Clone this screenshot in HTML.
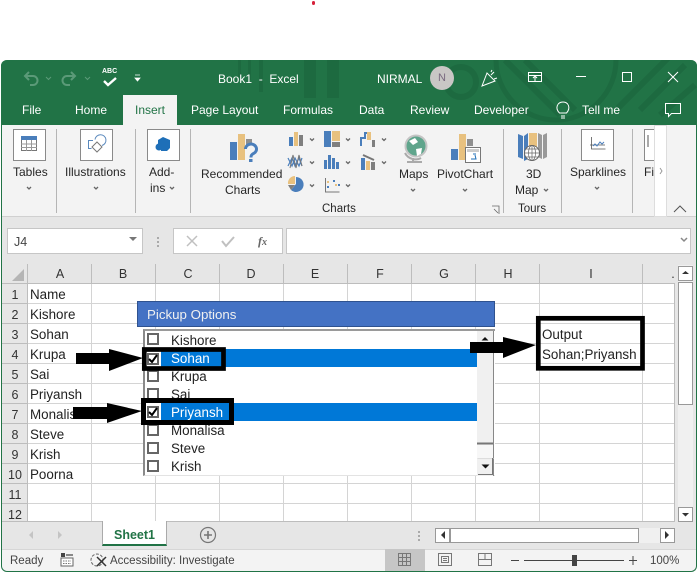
<!DOCTYPE html>
<html><head><meta charset="utf-8">
<style>
html,body{margin:0;padding:0;background:#fff}
#r{position:relative;width:699px;height:574px;overflow:hidden;background:#fff;font-family:"Liberation Sans",sans-serif;font-size:12px;color:#262626}
#r div,#r span.t{position:absolute;white-space:nowrap}
.t{position:absolute;white-space:nowrap;line-height:16px}
.w{color:#fff}
.g{color:#444}
.c{color:#222;font-size:13.4px}
.h{color:#333;text-align:center;width:24px;font-size:12.5px}
svg{position:absolute}
.box{background:#fff;border:1px solid #8a8a8a;box-sizing:border-box;width:33px;height:32px}
.sep{width:1px;background:#b5b5b5}
.cb{width:8px;height:8px;border:2px solid #666;background:#fff}
</style></head><body>
<div id="r">
<div style="left:312px;top:1px;width:3px;height:4px;background:#d6203a;border-radius:2px"></div>

<!-- window -->
<div style="left:1px;top:60px;width:696px;height:512px;background:#e6e6e6;border-left:1px solid #217346;border-right:1px solid #217346;border-bottom:1px solid #217346;box-sizing:border-box;border-radius:6px"></div>
<div style="left:1px;top:60px;width:696px;height:65px;background:#217346;border-radius:6px 6px 0 0"></div>
<svg style="left:1px;top:60px;overflow:hidden" width="696" height="65" viewBox="1 60 696 65">
 <g fill="none" stroke="#1d6a40" stroke-width="6">
  <circle cx="461" cy="82" r="15"/>
  <circle cx="556" cy="60" r="60" stroke-width="5"/>
  <path d="M505 60l55 55M525 60l50 50M640 110l45-45M618 108l50-50M660 115l35-30"/>
 </g>
 <g fill="#1d6a40"><rect x="238" y="60" width="3" height="20"/><rect x="248" y="60" width="3" height="20"/><rect x="259" y="60" width="4" height="32"/><rect x="304" y="60" width="12" height="38"/><rect x="327" y="60" width="12" height="38"/></g>
</svg>

<!-- qat -->
<svg style="left:0;top:60px" width="200" height="30" viewBox="0 60 200 30">
 <g fill="none" stroke="#5b9a78" stroke-width="2"><path d="M29 80l-4-4 4-4M25 76h8a4.500 4.500 0 0 1 0 9h-3M71 80l4-4-4-4M75 76h-8a4.500 4.500 0 0 0 0 9h3"/></g>
 <path d="M46 77l2.500 2.500 2.500-2.500M85 77l2.500 2.500 2.500-2.500" fill="none" stroke="#5b9a78"/>
 <path d="M104 81l4 4 8-7" fill="none" stroke="#fff" stroke-width="2.400"/>
 <path d="M135 75h5M135 78h5l-2.500 3z" fill="#fff" stroke="#fff" stroke-width=".8"/>
</svg>
<span class="t w" style="left:102px;top:67px;font-size:7px;font-weight:bold;line-height:10px">ABC</span>
<span class="t w" style="left:218px;top:71px">Book1&nbsp; -&nbsp; Excel</span>
<span class="t w" style="left:377px;top:71px">NIRMAL</span>
<div style="left:430px;top:66px;width:24px;height:24px;border-radius:50%;background:#c9c7c5"></div>
<span class="t" style="left:438px;top:70px;color:#7a6a80;font-size:11px">N</span>
<svg style="left:0;top:60px;overflow:visible" width="699" height="65" viewBox="0 60 699 65">
 <g fill="none" stroke="#fff" stroke-width="1">
  <path d="M482 86l5-13 8 8-13 5zM491 75l3-3M494 79l3-1M491 72l1-2"/>
  <path d="M528.500 72.500h13v9h-13zM528.500 75.500h13M535 81v-4M533 78l2-2 2 2"/>
  <path d="M576 76.500h10"/>
  <rect x="622.500" y="72.500" width="9" height="9"/>
  <path d="M668 72l10 10M678 72l-10 10"/>
  <path d="M665.500 103.500h15v10h-9l-3 3v-3h-3z"/>
  <path d="M561 116h4M561 118h4M559.500 113c-5-5-2-11 3.500-11s8 6 3.500 11z"/>
 </g>
</svg>

<!-- tabs -->
<div style="left:123px;top:95px;width:54px;height:30px;background:#f3f3f3"></div>
<span class="t w" style="left:22px;top:102px">File</span>
<span class="t w" style="left:75px;top:102px">Home</span>
<span class="t" style="left:135px;top:102px;color:#217346">Insert</span>
<span class="t w" style="left:191px;top:102px">Page Layout</span>
<span class="t w" style="left:283px;top:102px">Formulas</span>
<span class="t w" style="left:359px;top:102px">Data</span>
<span class="t w" style="left:410px;top:102px">Review</span>
<span class="t w" style="left:474px;top:102px">Developer</span>
<span class="t w" style="left:582px;top:102px">Tell me</span>

<!-- ribbon -->
<div style="left:2px;top:125px;width:694px;height:92px;background:#f3f3f3;border-bottom:1px solid #d0d0d0;box-sizing:border-box"></div>
<div class="box" style="left:13px;top:129px"></div>
<div class="box" style="left:80px;top:129px"></div>
<div class="box" style="left:147px;top:129px"></div>
<div class="box" style="left:581px;top:129px"></div>
<div class="box" style="left:644px;top:129px;width:11px;border-right:none"></div>
<div class="sep" style="left:56px;top:129px;height:84px"></div>
<div class="sep" style="left:135px;top:129px;height:84px"></div>
<div class="sep" style="left:190px;top:129px;height:84px"></div>
<div class="sep" style="left:503px;top:129px;height:84px"></div>
<div class="sep" style="left:561px;top:129px;height:84px"></div>
<div class="sep" style="left:632px;top:129px;height:84px"></div>
<div style="left:654px;top:125px;width:13px;height:92px;background:#fff;border:1px solid #ddd;box-sizing:border-box"></div>

<svg style="left:0;top:125px;overflow:visible" width="699" height="92" viewBox="0 125 699 92">
 <!-- tables -->
 <rect x="21.500" y="136.500" width="15" height="14" fill="#fff" stroke="#777"/><rect x="21" y="136" width="16" height="4" fill="#4a7ebb"/>
 <path d="M21 144h16M21 147.500h16M26.500 140v11M31.500 140v11" stroke="#999"/>
 <!-- illustrations -->
 <g fill="none" stroke="#5a89bd"><path d="M93 140.500h-4.500v8h3M95 139.500a5.500 5.500 0 1 1 7 6"/><path d="M97 142l5 5-5 5-5-5z" stroke="#777"/></g>
 <!-- addins -->
 <path d="M163 137l7 3v8l-3 3h-6v-6h-3v-5z" fill="#1e6fb8"/><circle cx="159" cy="147" r="3.500" fill="#1e6fb8"/>
 <!-- recommended -->
 <rect x="230" y="142" width="7" height="18" fill="#4a7ebb"/><rect x="238" y="134" width="7" height="26" fill="#e8c17f"/><rect x="246" y="139" width="6" height="6" fill="#8f8f8f"/>
 <path d="M245.500 149a5.500 5 0 1 1 8 4.500c-2 1-2.500 2-2.500 4" fill="none" stroke="#4a7ebb" stroke-width="3"/><rect x="249" y="159" width="3.500" height="3" fill="#4a7ebb"/>
 <!-- chart grid -->
 <rect x="289" y="137" width="4" height="9" fill="#4a7ebb"/><rect x="294" y="132" width="4" height="14" fill="#e8c17f"/><rect x="299" y="135" width="4" height="11" fill="#7f7f7f"/>
 <rect x="324" y="131" width="7" height="16" fill="#4a7ebb"/><rect x="332" y="131" width="8" height="10" fill="#e8c17f"/><rect x="332" y="142" width="8" height="5" fill="#7f7f7f"/>
 <path d="M361 146v-8h4v-5h3" fill="none" stroke="#4a7ebb" stroke-width="2"/><rect x="367" y="132" width="4" height="8" fill="#e8c17f"/><rect x="372" y="140" width="3" height="7" fill="#7f7f7f"/>
 <path d="M288 158l4 8 3-8 4 8 3-8M288 166l4-8 3 8 4-8 3 8" fill="none" stroke="#4a7ebb" stroke-width="1.200"/><path d="M290 168l3-13 3 13 3-13 3 11" fill="none" stroke="#777" stroke-width="1"/>
 <rect x="324" y="160" width="3" height="9" fill="#4a7ebb"/><rect x="328" y="155" width="3" height="14" fill="#4a7ebb"/><rect x="332" y="158" width="3" height="11" fill="#4a7ebb"/><rect x="336" y="162" width="3" height="7" fill="#4a7ebb"/>
 <rect x="361" y="158" width="4" height="12" fill="#4a7ebb"/><rect x="366" y="161" width="4" height="9" fill="#e8c17f"/><rect x="371" y="162" width="4" height="8" fill="#7f7f7f"/><path d="M363 155l11 5" stroke="#777" stroke-width="2"/>
 <path d="M296 177a7.500 7.500 0 1 1-5 13l5-6z" fill="#4a7ebb"/><path d="M295 176v8h-7a7 7 0 0 1 7-8z" fill="#e8c17f"/><path d="M288 185h7l-4 5z" fill="#7f7f7f"/>
 <path d="M325.500 178v14h14" fill="none" stroke="#777"/><g fill="#e8c17f"><rect x="327" y="181" width="2" height="2"/><rect x="335" y="184" width="2" height="2"/></g><g fill="#4a7ebb"><rect x="333" y="180" width="2" height="2"/><rect x="327" y="186" width="2" height="2"/><rect x="338" y="184" width="2" height="2"/></g>
 <g fill="none" stroke="#666" stroke-width="1.300">
  <path d="M310 138.500l2 2 2-2M346 138.500l2 2 2-2M382 138.500l2 2 2-2M310 161.500l2 2 2-2M346 161.500l2 2 2-2M382 161.500l2 2 2-2M310 184.500l2 2 2-2M346 184.500l2 2 2-2"/>
  <path d="M27 187l2 2 2-2M94 187l2 2 2-2M170 187l2 2 2-2M411 189l2 2 2-2M463 189l2 2 2-2M544 189l2 2 2-2M595 187l2 2 2-2"/>
 </g>
 <!-- maps -->
 <circle cx="416" cy="146" r="10.500" fill="#5fa58c" stroke="#c4c4c4" stroke-width="2"/><path d="M409 141l6-3 3 4-5 3zM416 149l6-1-1 6-4 2z" fill="#fff"/><path d="M405 153c3 6 11 8 16 5M413 158v3M407 162h15" fill="none" stroke="#aaa" stroke-width="2"/>
 <!-- pivot -->
 <rect x="451" y="149" width="7" height="11" fill="#4a7ebb"/><rect x="459" y="134" width="7" height="26" fill="#e8c17f"/><rect x="467" y="139" width="6" height="7" fill="#8f8f8f"/>
 <rect x="465.500" y="147.500" width="15" height="15" fill="#fff" stroke="#777"/><rect x="467" y="149" width="12" height="3" fill="#ccc"/><path d="M471 159h5l-1-4M476 154h-3" fill="none" stroke="#1e6fb8"/>
 <!-- 3d map -->
 <path d="M518 134l5 2v23l-5-2z" fill="#4a7ebb"/><path d="M524 136l4-3v26l-4 2z" fill="#4a7ebb"/><path d="M529 133h8v15h-8z" fill="#e8c17f"/><path d="M538 133l4 2v24l-4-2zM543 135l4-2v24l-4 2z" fill="#999"/>
 <circle cx="532" cy="153" r="7.500" fill="#fff" stroke="#666"/><path d="M524.500 153h15M532 145.500v15M526 149h12M526 157h12" stroke="#666" stroke-width=".7" fill="none"/><ellipse cx="532" cy="153" rx="3.500" ry="7.500" fill="none" stroke="#666" stroke-width=".7"/>
 <!-- sparkline -->
 <path d="M591.500 137v12h14M590 145h15" fill="none" stroke="#555" stroke-width=".8"/><path d="M593 146l2-2 2 2 3-4 2 2 2-2" fill="none" stroke="#4a7ebb"/>
 <path d="M648 135v12" stroke="#555"/>
 <path d="M660 168l2 3-2 3" fill="none" stroke="#999"/>
 <path d="M674 212l6-6 6 6" fill="none" stroke="#555"/>
 <path d="M492 206h7v8M494 209l4 4" fill="none" stroke="#666" stroke-width=".8"/>
</svg>

<span class="t" style="left:13px;top:164px">Tables</span>
<span class="t" style="left:65px;top:164px">Illustrations</span>
<span class="t" style="left:149px;top:164px">Add-</span>
<span class="t" style="left:150px;top:180px">ins</span>
<span class="t" style="left:201px;top:166px">Recommended</span>
<span class="t" style="left:225px;top:182px">Charts</span>
<span class="t" style="left:399px;top:166px">Maps</span>
<span class="t" style="left:437px;top:166px">PivotChart</span>
<span class="t" style="left:526px;top:166px">3D</span>
<span class="t" style="left:515px;top:182px">Map</span>
<span class="t" style="left:570px;top:164px">Sparklines</span>
<span class="t" style="left:644px;top:164px">Fi</span>
<span class="t" style="left:322px;top:201px;font-size:11.500px">Charts</span>
<span class="t" style="left:518px;top:201px;font-size:11.500px">Tours</span>

<!-- formula bar -->
<div style="left:7px;top:228px;width:136px;height:26px;background:#fff;border:1px solid #c6c6c6;box-sizing:border-box"></div>
<span class="t g" style="left:14px;top:234px;font-size:12.5px">J4</span>
<div style="left:173px;top:228px;width:110px;height:26px;background:#fff;border:1px solid #c6c6c6;box-sizing:border-box"></div>
<div style="left:286px;top:228px;width:405px;height:26px;background:#fff;border:1px solid #c6c6c6;box-sizing:border-box"></div>
<svg style="left:0;top:217px" width="699" height="50" viewBox="0 217 699 50">
 <path d="M129 237h8l-4 4z" fill="#777"/>
 <path d="M158 237v2M158 241v2M158 245v2" stroke="#aaa" stroke-width="2"/>
 <path d="M187 236l10 10M197 236l-10 10" stroke="#c0c0c0" stroke-width="1.500"/>
 <path d="M222 241l4 5 8-9" fill="none" stroke="#c0c0c0" stroke-width="2"/>
 <path d="M681 238l3 3 3-3" fill="none" stroke="#888" stroke-width="1.500"/>
</svg>
<span class="t" style="left:258px;top:233px;font-family:'Liberation Serif',serif;font-style:italic;font-weight:bold;color:#666;font-size:12px">f<span style="font-size:10px">x</span></span>

<!-- grid -->
<div style="left:27px;top:283px;width:647px;height:238px;background:#fff"></div>
<svg style="left:0;top:264px" width="699" height="258" viewBox="0 264 699 258">
 <path d="M12 281h12v-12z" fill="#b5b5b5"/>
 <g stroke="#d4d4d4" stroke-width="1">
  <path d="M91.500 283v238M155.500 283v238M219.500 283v238M283.500 283v238M347.500 283v238M411.500 283v238M475.500 283v238M539.500 283v238M642.500 283v238"/>
  <path d="M27 303.500h647M27 323.500h647M27 343.500h647M27 363.500h647M27 383.500h647M27 403.500h647M27 423.500h647M27 443.500h647M27 463.500h647M27 483.500h647M27 503.500h647"/>
 </g>
 <g stroke="#bdbdbd" stroke-width="1">
  <path d="M27.500 264v257M91.500 264v19M155.500 264v19M219.500 264v19M283.500 264v19M347.500 264v19M411.500 264v19M475.500 264v19M539.500 264v19M642.500 264v19"/>
  <path d="M2 283.500h672M2 303.500h25M2 323.500h25M2 343.500h25M2 363.500h25M2 383.500h25M2 403.500h25M2 423.500h25M2 443.500h25M2 463.500h25M2 483.500h25M2 503.500h25"/>
  <path d="M674.500 283v238M2 521.500h673"/>
 </g>
</svg>
<span class="t h" style="left:48px;top:266px">A</span><span class="t h" style="left:111px;top:266px">B</span><span class="t h" style="left:176px;top:266px">C</span><span class="t h" style="left:239px;top:266px">D</span><span class="t h" style="left:303px;top:266px">E</span><span class="t h" style="left:368px;top:266px">F</span><span class="t h" style="left:432px;top:266px">G</span><span class="t h" style="left:496px;top:266px">H</span><span class="t h" style="left:579px;top:266px">I</span><span class="t h" style="left:661px;top:266px">.</span>
<span class="t h" style="left:3px;top:287px">1</span><span class="t h" style="left:3px;top:307px">2</span><span class="t h" style="left:3px;top:327px">3</span><span class="t h" style="left:3px;top:347px">4</span><span class="t h" style="left:3px;top:367px">5</span><span class="t h" style="left:3px;top:387px">6</span><span class="t h" style="left:3px;top:407px">7</span><span class="t h" style="left:3px;top:427px">8</span><span class="t h" style="left:3px;top:447px">9</span><span class="t h" style="left:3px;top:467px">10</span><span class="t h" style="left:3px;top:487px">11</span><span class="t h" style="left:3px;top:507px">12</span>

<span class="t c" style="left:30px;top:287px">Name</span>
<span class="t c" style="left:30px;top:307px">Kishore</span>
<span class="t c" style="left:30px;top:327px">Sohan</span>
<span class="t c" style="left:30px;top:347px">Krupa</span>
<span class="t c" style="left:30px;top:367px">Sai</span>
<span class="t c" style="left:30px;top:387px">Priyansh</span>
<span class="t c" style="left:30px;top:407px">Monalisa</span>
<span class="t c" style="left:30px;top:427px">Steve</span>
<span class="t c" style="left:30px;top:447px">Krish</span>
<span class="t c" style="left:30px;top:467px">Poorna</span>

<!-- userform -->
<div style="left:137px;top:301px;width:358px;height:26px;background:#4472c4;border:1px solid #2f528f;box-sizing:border-box"></div>
<span class="t" style="left:147px;top:307px;color:#f0f0f0;font-size:13.3px">Pickup Options</span>
<div style="left:143px;top:329px;width:352px;height:147px;background:#fff;border-top:2px solid #9a9a9a;border-left:2px solid #8a8a8a;border-bottom:1px solid #e3e3e3;box-sizing:border-box"></div>
<div style="left:161px;top:349px;width:316px;height:18px;background:#0078d7"></div>
<div style="left:161px;top:403px;width:316px;height:18px;background:#0078d7"></div>
<div style="left:477px;top:331px;width:17px;height:145px;background:#f0f0f0;border-right:1px solid #888;box-sizing:border-box"></div>
<div style="left:477px;top:445px;width:16px;height:13px;background:#f7f7f7"></div>
<svg style="left:0;top:329px" width="699" height="150" viewBox="0 329 699 150">
 <path d="M477 443.500h16" stroke="#777" stroke-width="2" fill="none"/>
 <path d="M477.500 458.500h16" stroke="#ddd"/>
 <path d="M492.500 458v16M478 474.500h15" stroke="#777"/>
 <path d="M485 337l-3.500 3.500h7zM481.500 464.500h8l-4 4z" fill="#111"/>
</svg>

<div class="cb" style="left:147px;top:333px"></div>
<div class="cb" style="left:147px;top:353px"></div>
<div class="cb" style="left:147px;top:370px"></div>
<div class="cb" style="left:147px;top:388px"></div>
<div class="cb" style="left:147px;top:406px"></div>
<div class="cb" style="left:147px;top:424px"></div>
<div class="cb" style="left:147px;top:442px"></div>
<div class="cb" style="left:147px;top:460px"></div>
<span class="t c" style="left:171px;top:333px">Kishore</span>
<span class="t w" style="left:171px;top:351px;font-size:13.4px">Sohan</span>
<span class="t c" style="left:171px;top:369px">Krupa</span>
<span class="t c" style="left:171px;top:387px">Sai</span>
<span class="t w" style="left:171px;top:405px;font-size:13.4px">Priyansh</span>
<span class="t c" style="left:171px;top:423px">Monalisa</span>
<span class="t c" style="left:171px;top:441px">Steve</span>
<span class="t c" style="left:171px;top:459px">Krish</span>

<span class="t c" style="left:542px;top:327px">Output</span>
<span class="t c" style="left:542px;top:347px">Sohan;Priyansh</span>

<!-- annotations -->
<svg style="left:0;top:0" width="699" height="574">
 <g fill="none" stroke="#000">
  <rect x="144.300" y="349.500" width="79.200" height="19" stroke-width="4.700"/>
  <rect x="143.500" y="400.500" width="88" height="22" stroke-width="5"/>
  <rect x="538.300" y="318.300" width="104.200" height="50" stroke-width="4.700"/>
 </g>
 <path d="M149 359l3 3 5-7" fill="none" stroke="#000" stroke-width="2"/>
 <path d="M149 412l3 3 5-7" fill="none" stroke="#000" stroke-width="2"/>
 <path d="M76 353h33v-4l34 9-34 13v-7H76z" fill="#000"/>
 <path d="M73 407h34v-4l35 8-35 12v-4H73z" fill="#000"/>
 <path d="M470 342h33v-5l33 8-33 13v-5h-33z" fill="#000"/>
</svg>

<!-- right scrollbar -->
<div style="left:678px;top:265px;width:15px;height:257px;background:#f0f0f0"></div>
<div style="left:678px;top:266px;width:15px;height:15px;background:#fff;border:1px solid #999;box-sizing:border-box"></div>
<div style="left:678px;top:282px;width:15px;height:123px;background:#fff;border:1px solid #999;box-sizing:border-box"></div>
<div style="left:678px;top:507px;width:15px;height:15px;background:#fff;border:1px solid #999;box-sizing:border-box"></div>
<svg style="left:0;top:264px" width="699" height="260" viewBox="0 264 699 260">
 <path d="M685.500 271l-3.500 3h7zM682 513h7l-3.500 3.500z" fill="#333"/>
</svg>

<!-- sheet tabs -->
<div style="left:2px;top:522px;width:694px;height:27px;background:#e6e6e6"></div>
<div style="left:102px;top:521px;width:65px;height:25px;background:#fff;border-left:1px solid #aaa;border-right:1px solid #aaa;border-bottom:2px solid #217346;box-sizing:border-box"></div>
<span class="t" style="left:114px;top:527px;color:#217346;font-weight:bold;font-size:12.500px">Sheet1</span>
<div style="left:435px;top:528px;width:15px;height:15px;background:#fff;border:1px solid #999;box-sizing:border-box"></div>
<div style="left:450px;top:528px;width:189px;height:15px;background:#fff;border:1px solid #999;box-sizing:border-box"></div>
<div style="left:639px;top:528px;width:21px;height:15px;background:#f0f0f0"></div>
<div style="left:660px;top:528px;width:15px;height:15px;background:#fff;border:1px solid #999;box-sizing:border-box"></div>
<svg style="left:0;top:521px" width="699" height="28" viewBox="0 521 699 28">
 <path d="M33 531l-4 4 4 4zM58 531l4 4-4 4z" fill="#c4c4c4"/>
 <circle cx="208" cy="535" r="7.500" fill="none" stroke="#777" stroke-width="1.200"/><path d="M204 535h8M208 531v8" stroke="#777" stroke-width="1.600"/>
 <path d="M419 531v2M419 535v2M419 539v2" stroke="#aaa" stroke-width="2"/>
 <path d="M445 531l-4 4 4 4zM665 531l4 4-4 4z" fill="#333"/>
</svg>

<!-- status -->
<div style="left:2px;top:549px;width:694px;height:22px;background:#f3f3f3;border-top:1px solid #d6d6d6;box-sizing:border-box;border-radius:0 0 6px 6px"></div>
<div style="left:385px;top:549px;width:40px;height:22px;background:#c6c6c6"></div>
<span class="t" style="left:10px;top:553px;font-size:11.500px;color:#444">Ready</span>
<span class="t" style="left:110px;top:553px;font-size:11.500px;color:#444">Accessibility: Investigate</span>
<span class="t" style="left:650px;top:553px;font-size:11.500px;color:#444">100%</span>
<svg style="left:0;top:549px" width="699" height="24" viewBox="0 549 699 24">
 <rect x="61" y="553" width="4" height="4" fill="#444"/><rect x="66" y="554" width="7" height="2" fill="#888"/><rect x="61" y="558" width="12" height="8" fill="#fff" stroke="#666"/><path d="M63 561h8M63 563.500h8" stroke="#777" stroke-dasharray="1.500 1"/>
 <circle cx="97" cy="560" r="6" fill="none" stroke="#666" stroke-dasharray="3 1.500"/><path d="M97 557l9 9M106 557l-9 9" stroke="#333" stroke-width="1.500"/>
 <g fill="none" stroke="#777"><path d="M398.500 553.500h12v12h-12zM398.500 557.500h12M398.500 561.500h12M402.500 553.500v12M406.500 553.500v12"/>
 <path d="M438.500 553.500h13v12h-13zM441.500 556.500h7v6h-7zM443 558.500h4M443 560.500h4"/>
 <path d="M478.500 553.500h13v12h-13zM478.500 559.500h6.500v-6M485 559.500h6"/></g>
 <path d="M511 560.500h8M629 560.500h8M633 556v9M524 560.500h100" stroke="#444" stroke-width="1" fill="none"/>
 <rect x="572" y="555" width="5" height="11" fill="#444"/>
</svg>
</div>
</body></html>
